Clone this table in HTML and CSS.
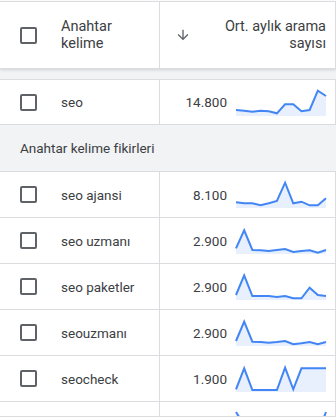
FILE: index.html
```html
<!DOCTYPE html>
<html lang="tr">
<head>
<meta charset="utf-8">
<link rel="stylesheet" href="styles.css">
</head>
<body>
<div class="frame">
  <div class="table">
    <div class="head">
      <div class="hcell c1">
        <span class="cb"></span>
        <span class="htext">Anahtar<br>kelime</span>
      </div>
      <div class="hcell c2">
        <svg class="arrow" width="16" height="16" viewBox="0 0 24 24"><path d="M20 12l-1.41-1.41L13 16.17V4h-2v12.17l-5.58-5.59L4 12l8 8 8-8z" fill="#5f6368"/></svg>
        <span class="htext right">Ort. aylık arama<br>sayısı</span>
      </div>
    </div>
    <div class="band"></div>
    <div class="row first">
      <div class="cell c1"><span class="cb"></span><span class="kw">seo</span></div>
      <div class="cell c2"><span class="num">14.800</span>
        <svg class="spark" width="90" height="27" viewBox="0 0 90 27"><polygon class="area" points="0,21 8.18,21.7 16.36,22.7 24.55,21.7 32.73,22.3 40.91,24.3 49.09,15.3 57.27,15.3 65.45,22.3 73.64,21 81.82,1.7 90,7 90,27 0,27"/><polyline class="line" points="0,21 8.18,21.7 16.36,22.7 24.55,21.7 32.73,22.3 40.91,24.3 49.09,15.3 57.27,15.3 65.45,22.3 73.64,21 81.82,1.7 90,7"/></svg>
      </div>
    </div>
    <div class="group">Anahtar kelime fikirleri</div>
    <div class="row">
      <div class="cell c1"><span class="cb"></span><span class="kw">seo ajansi</span></div>
      <div class="cell c2"><span class="num">8.100</span>
        <svg class="spark" width="90" height="27" viewBox="0 0 90 27"><polygon class="area" points="0,21.3 8.18,22.3 16.36,22.3 24.55,24.3 32.73,22.3 40.91,20 49.09,1.7 57.27,22.3 65.45,20.7 73.64,24.3 81.82,24.3 90,17.3 90,27 0,27"/><polyline class="line" points="0,21.3 8.18,22.3 16.36,22.3 24.55,24.3 32.73,22.3 40.91,20 49.09,1.7 57.27,22.3 65.45,20.7 73.64,24.3 81.82,24.3 90,17.3"/></svg>
      </div>
    </div>
    <div class="row">
      <div class="cell c1"><span class="cb"></span><span class="kw">seo uzmanı</span></div>
      <div class="cell c2"><span class="num">2.900</span>
        <svg class="spark" width="90" height="27" viewBox="0 0 90 27"><polygon class="area" points="0,21.3 8.18,3.3 16.36,23 24.55,23.3 32.73,24 40.91,23 49.09,22 57.27,25 65.45,24 73.64,23.3 81.82,25.7 90,23 90,27 0,27"/><polyline class="line" points="0,21.3 8.18,3.3 16.36,23 24.55,23.3 32.73,24 40.91,23 49.09,22 57.27,25 65.45,24 73.64,23.3 81.82,25.7 90,23"/></svg>
      </div>
    </div>
    <div class="row">
      <div class="cell c1"><span class="cb"></span><span class="kw">seo paketler</span></div>
      <div class="cell c2"><span class="num">2.900</span>
        <svg class="spark" width="90" height="27" viewBox="0 0 90 27"><polygon class="area" points="0,22 8.18,2.3 16.36,23 24.55,23 32.73,23 40.91,24 49.09,23 57.27,25.3 65.45,25.3 73.64,14.7 81.82,22 90,23 90,27 0,27"/><polyline class="line" points="0,22 8.18,2.3 16.36,23 24.55,23 32.73,23 40.91,24 49.09,23 57.27,25.3 65.45,25.3 73.64,14.7 81.82,22 90,23"/></svg>
      </div>
    </div>
    <div class="row">
      <div class="cell c1"><span class="cb"></span><span class="kw">seouzmanı</span></div>
      <div class="cell c2"><span class="num">2.900</span>
        <svg class="spark" width="90" height="27" viewBox="0 0 90 27"><polygon class="area" points="0,22 8.18,2.7 16.36,22.7 24.55,23 32.73,23.7 40.91,23 49.09,22 57.27,25.3 65.45,24.3 73.64,23 81.82,25.3 90,23 90,27 0,27"/><polyline class="line" points="0,22 8.18,2.7 16.36,22.7 24.55,23 32.73,23.7 40.91,23 49.09,22 57.27,25.3 65.45,24.3 73.64,23 81.82,25.3 90,23"/></svg>
      </div>
    </div>
    <div class="row">
      <div class="cell c1"><span class="cb"></span><span class="kw">seocheck</span></div>
      <div class="cell c2"><span class="num">1.900</span>
        <svg class="spark" width="90" height="27" viewBox="0 0 90 27"><polygon class="area" points="0,24.3 8.18,3.3 16.36,25 24.55,25 32.73,25 40.91,25 49.09,2.7 57.27,24.3 65.45,3.3 73.64,3.3 81.82,3.3 90,3.3 90,27 0,27"/><polyline class="line" points="0,24.3 8.18,3.3 16.36,25 24.55,25 32.73,25 40.91,25 49.09,2.7 57.27,24.3 65.45,3.3 73.64,3.3 81.82,3.3 90,3.3"/></svg>
      </div>
    </div>
    <div class="row">
      <div class="cell c1"><span class="cb"></span></div>
      <div class="cell c2">
        <svg class="spark" width="90" height="27" viewBox="0 0 90 27"><polygon class="area" points="0,1 8.18,14 16.36,22 24.55,22 32.73,23 40.91,21 49.09,22 57.27,24 65.45,22 73.64,23 81.82,22 90,1 90,27 0,27"/><polyline class="line" points="0,1 8.18,14 16.36,22 24.55,22 32.73,23 40.91,21 49.09,22 57.27,24 65.45,22 73.64,23 81.82,22 90,1"/></svg>
      </div>
    </div>
  </div>
</div>
</body>
</html>
```
FILE: styles.css
```css
* { box-sizing: border-box; }
html, body { margin: 0; padding: 0; background: #fff; }
body {
  font-family: Roboto, "Liberation Sans", Arial, sans-serif;
  color: #3c4043;
  width: 336px;
  height: 417px;
  overflow: hidden;
}
.frame {
  height: 417px;
  padding-top: 1px;
  border-bottom: 1px solid #dadce0;
  overflow: hidden;
}
.table { display: flex; flex-direction: column; }
.head {
  display: grid;
  grid-template-columns: 160px 176px;
  height: 68px;
  border-top: 1px solid #dadce0;
  border-bottom: 1px solid #dadce0;
  box-shadow: 0 1px 3px rgba(60,64,67,0.18);
  position: relative;
  z-index: 1;
  background: #fff;
}
.hcell { display: flex; align-items: center; border-right: 1px solid #dadce0; }
.hcell.c1 { padding-left: 20px; gap: 24px; }
.hcell.c2 { padding-left: 15px; padding-right: 9px; justify-content: space-between; }
.htext { font-size: 14.5px; font-weight: 400; line-height: 17px; color: #3c4043; }
.htext.right { text-align: right; }
.arrow { display: block; }
.band { height: 10px; background: #f1f3f4; }
.row {
  display: grid;
  grid-template-columns: 160px 176px;
  height: 46px;
  border-bottom: 1px solid #dadce0;
  flex-shrink: 0;
}
.row.first { border-top: 1px solid #dadce0; }
.cell { display: flex; align-items: center; border-right: 1px solid #dadce0; }
.cell.c1 { padding-left: 20px; gap: 24px; }
.cell.c2 { justify-content: flex-end; padding-right: 9px; gap: 9px; }
.cb {
  width: 17px; height: 17px;
  border: 2px solid #5f6368;
  border-radius: 2px;
  flex-shrink: 0;
}
.kw, .num { font-size: 13.5px; color: #3c4043; }
.spark { display: block; overflow: visible; }
.spark .area { fill: #e8f0fe; }
.spark .line { fill: none; stroke: #4285f4; stroke-width: 2; stroke-linejoin: miter; }
.group {
  height: 47px;
  flex-shrink: 0;
  background: #f1f3f4;
  border-bottom: 1px solid #dadce0;
  display: flex;
  align-items: center;
  padding-left: 20px;
  font-size: 13.5px;
  color: #3c4043;
}
```
